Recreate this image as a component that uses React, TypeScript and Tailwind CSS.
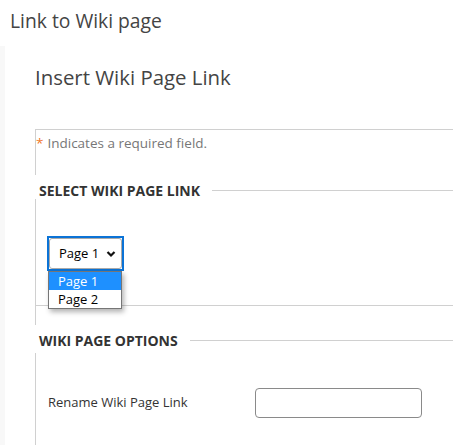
export default function App() {
  return (
    <main className="w-[453px] h-[445px] overflow-hidden bg-white font-['Open_Sans',sans-serif] text-[#333]">
      <div className="h-[46px] pl-[10px] pt-[8px] text-[19.3px] leading-[26px] text-[#444]">
        Link to Wiki page
      </div>

      <div className="flex h-[399px]">
        <div className="w-[5px] shrink-0 bg-[#f8f8f8]" />
        <div className="flex-1 pl-[30px]">
          <h1 className="mt-[17px] text-[20.4px] leading-[28px] text-[#444]">
            Insert Wiki Page Link
          </h1>

          {/* required note */}
          <div className="mt-[38px] h-[46px] border-t border-l border-[#d0d0d0] pt-[4px] text-[13.5px] leading-[18px]">
            <span className="text-[#f0782a]">*</span>
            <span className="ml-[4px] text-[#777]">Indicates a required field.</span>
          </div>

          {/* select wiki page link */}
          <div className="mt-[7px] flex h-[17px] items-center">
            <span className="pl-[4px] text-[14px] font-bold text-[#333]">SELECT WIKI PAGE LINK</span>
            <div className="ml-[12px] h-px flex-1 bg-[#d0d0d0]" />
          </div>
          <div className="border-l border-[#d0d0d0]">
            <div className="h-[107px] border-b border-[#d0d0d0] pt-[37px] pl-[11px]">
              <div className="relative w-[77px]">
                <div className="h-[35px] border-2 border-[#0b73d6]">
                  <div className="flex h-full items-center justify-between rounded-[3px] border border-[#aaa] bg-white pl-[9px] pr-[5px] text-[13px] text-black">
                    <span>Page 1</span>
                    <svg width="10" height="8" viewBox="0 0 10 8" fill="none">
                      <path d="M1.5 2l3.5 3.5L8.5 2" stroke="#111" strokeWidth="2.2" />
                    </svg>
                  </div>
                </div>
                <div className="absolute left-[1px] top-[35px] w-[74px] border border-[#767676] bg-white text-[13px] leading-[18px] text-black shadow-[2px_3px_5px_rgba(0,0,0,0.3)]">
                  <div className="bg-[#1e90ff] pl-[9px] text-white">Page 1</div>
                  <div className="pl-[9px]">Page 2</div>
                </div>
              </div>
            </div>
            <div className="h-[19px]" />
          </div>

          {/* wiki page options */}
          <div className="mt-[7px] flex h-[17px] items-center">
            <span className="pl-[4px] text-[14px] font-bold text-[#333]">WIKI PAGE OPTIONS</span>
            <div className="ml-[12px] h-px flex-1 bg-[#d0d0d0]" />
          </div>
          <div className="mt-[4px] h-[100px] border-l border-[#d0d0d0] pt-[35px]">
            <div className="flex items-center">
              <span className="w-[219px] pl-[12px] text-[13px] text-[#333]">Rename Wiki Page Link</span>
              <input className="h-[30px] w-[167px] rounded-[4px] border border-[#8a8a8a] bg-white outline-none" />
            </div>
          </div>
        </div>
      </div>
    </main>
  );
}
